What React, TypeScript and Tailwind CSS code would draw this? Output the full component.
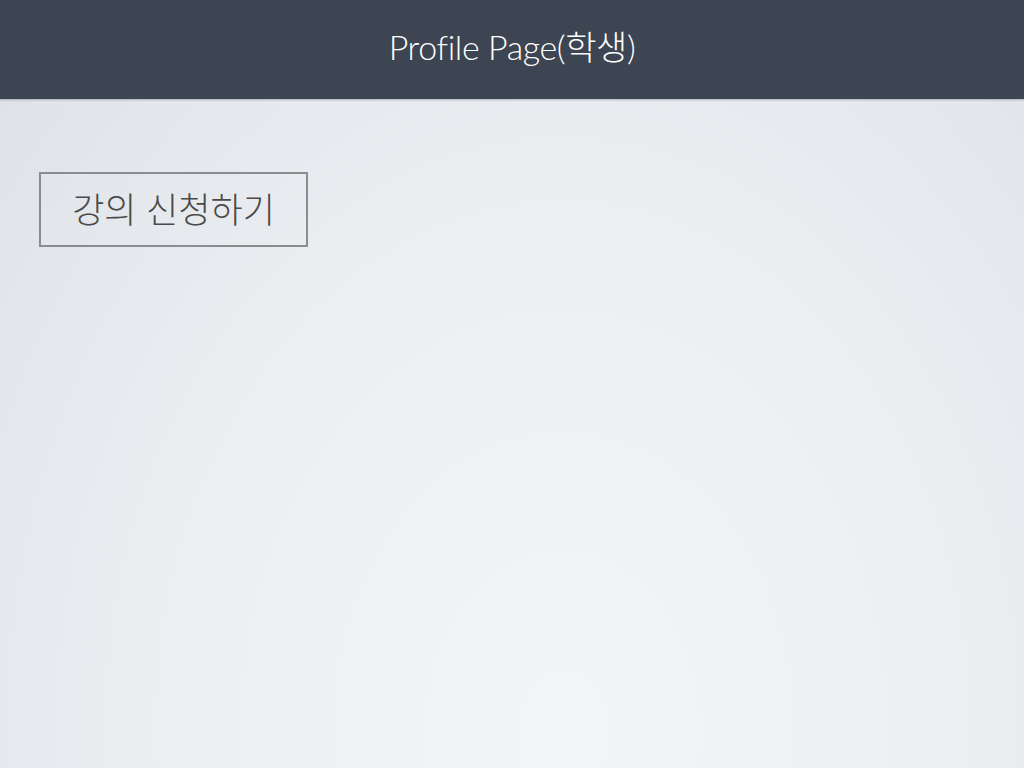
export default function App() {
  return (
    <div className="flex min-h-[768px] w-full flex-col bg-[radial-gradient(ellipse_at_55%_95%,#f3f5f8_0%,#eceef2_50%,#dde1e6_100%)] font-['Lato','Noto_Sans_CJK_KR',sans-serif]">
      <header className="flex h-[99px] items-center justify-center bg-[#3d4452] shadow-[0_1px_2px_rgba(0,0,0,0.25)]">
        <h1 className="pb-[6px] text-[34px] font-light tracking-[-0.4px] text-white">
          Profile Page(학생)
        </h1>
      </header>
      <main className="px-[39px] pt-[73px]">
        <button className="flex h-[75px] w-[269px] items-center justify-center border-2 border-[#8a8c8f] text-[35px] font-light text-[#4a4a4a]">
          강의 신청하기
        </button>
      </main>
    </div>
  )
}
